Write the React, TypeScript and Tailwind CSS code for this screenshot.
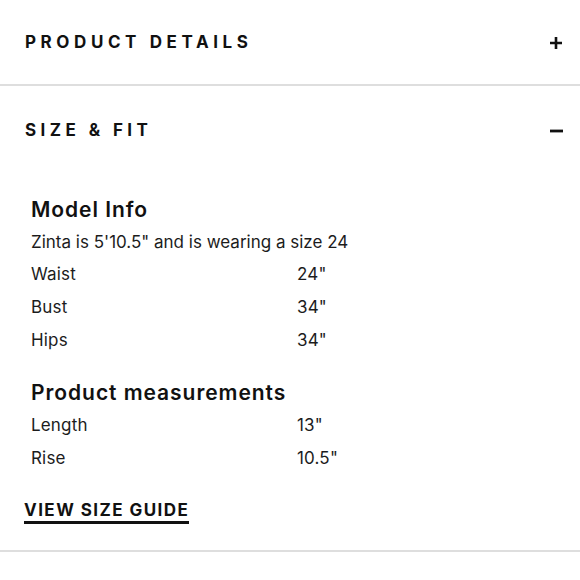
import React from "react";

const Plus = () => (
  <svg width="14" height="14" viewBox="0 0 14 14" className="block">
    <path d="M7 1v12M1 7h12" stroke="#111" strokeWidth="2.6" />
  </svg>
);

const Minus = () => (
  <svg width="14" height="14" viewBox="0 0 14 14" className="block">
    <path d="M1 7h13" stroke="#111" strokeWidth="2.8" />
  </svg>
);

const Row = ({ label, value }: { label: string; value: string }) => (
  <div className="grid grid-cols-[266px_1fr] text-[17px] leading-[33px] tracking-[0.01em] text-[#1c1c1c]">
    <span>{label}</span>
    <span>{value}</span>
  </div>
);

export default function App() {
  return (
    <div
      className="w-[580px] h-[580px] bg-white overflow-hidden"
      style={{ fontFamily: "Inter, 'Noto Sans', sans-serif" }}
    >
      <div className="h-[86px] pt-[2px] flex items-center justify-between pl-[25px] pr-[17px] border-b-2 border-[#dedede]">
        <span className="text-[17px] font-bold tracking-[0.27em] text-[#111]">PRODUCT DETAILS</span>
        <Plus />
      </div>
      <div className="h-[87px] pt-[2px] flex items-center justify-between pl-[25px] pr-[17px]">
        <span className="text-[17px] font-bold tracking-[0.26em] text-[#111]">SIZE &amp; FIT</span>
        <Minus />
      </div>
      <div className="pl-[31px] pt-[21px]">
        <div className="text-[21px] leading-[32px] font-semibold tracking-[0.045em] text-[#111]">Model Info</div>
        <div className="text-[17px] leading-[32px] text-[#1c1c1c]">Zinta is 5'10.5" and is wearing a size 24</div>
        <Row label="Waist" value={'24"'} />
        <Row label="Bust" value={'34"'} />
        <Row label="Hips" value={'34"'} />
        <div className="mt-[20px] text-[21px] leading-[32px] font-semibold tracking-[0.045em] text-[#111]">Product measurements</div>
        <Row label="Length" value={'13"'} />
        <Row label="Rise" value={'10.5"'} />
      </div>
      <div className="pl-[24px] mt-[23px]">
        <span className="inline-block text-[17px] leading-[17px] font-bold tracking-[0.085em] text-[#111] pb-[2px] border-b-[3px] border-[#111]">
          VIEW SIZE GUIDE
        </span>
      </div>
      <div className="mt-[26px] h-[2px] bg-[#dedede]" />
    </div>
  );
}
